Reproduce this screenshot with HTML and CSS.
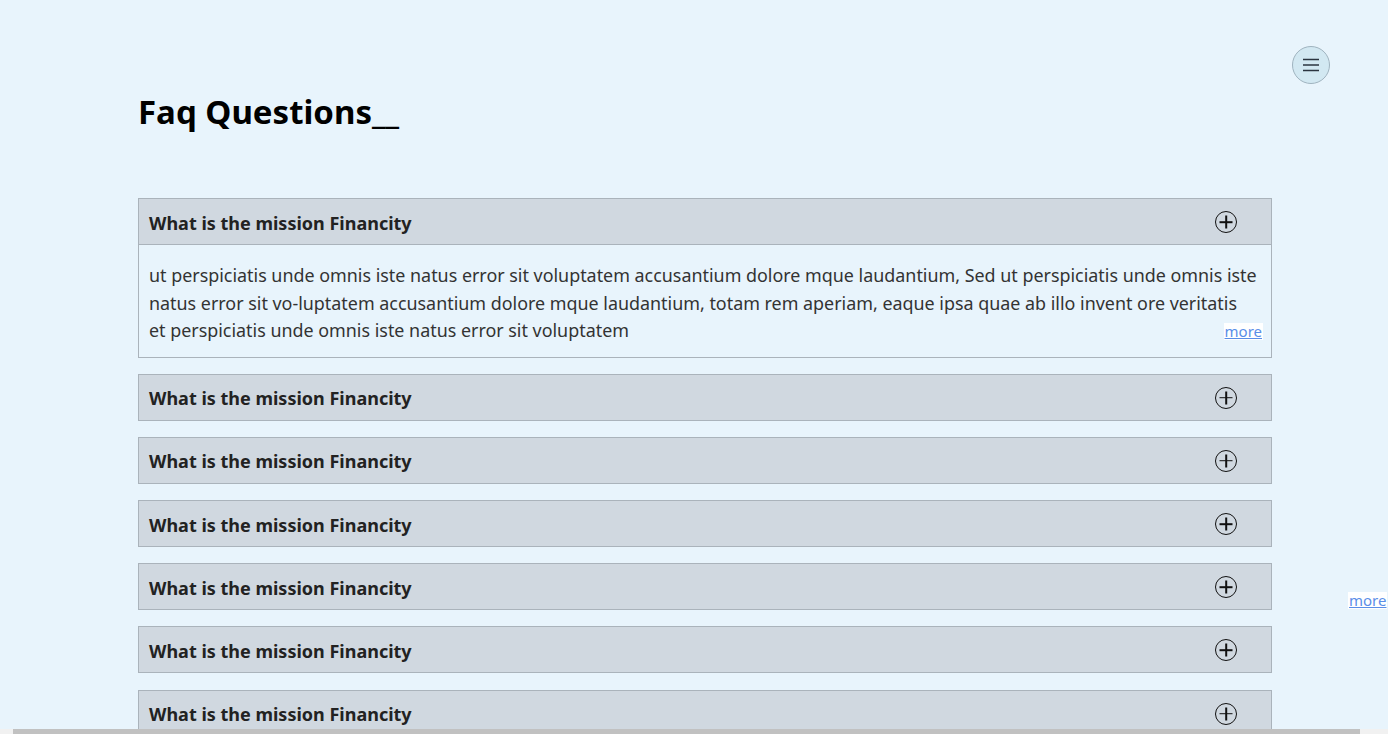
FILE: index.html
```html
<!DOCTYPE html>
<html lang="en">
<head>
<meta charset="utf-8">
<title>Faq Questions</title>
<link rel="stylesheet" href="styles.css">
</head>
<body>
<div class="page">
  <button class="menu-btn" aria-label="Menu">
    <svg width="16" height="14" viewBox="0 0 16 14"><path d="M0 1.5H16M0 7H16M0 12.5H16" stroke="#2b3440" stroke-width="1.3" fill="none"/></svg>
  </button>
  <main class="faq">
    <h1 class="title">Faq Questions__</h1>
    <div class="list">
      <div class="item open">
        <div class="head"><span class="q">What is the mission Financity</span><span class="plus"></span></div>
        <div class="body">
          <p>ut perspiciatis unde omnis iste natus error sit voluptatem accusantium dolore mque laudantium, Sed ut perspiciatis unde omnis iste natus error sit vo-luptatem accusantium dolore mque laudantium, totam rem aperiam, eaque ipsa quae ab illo invent ore veritatis et perspiciatis unde omnis iste natus error sit voluptatem</p>
          <a class="more" href="#">more</a>
        </div>
      </div>
      <div class="item"><div class="head"><span class="q">What is the mission Financity</span><span class="plus"></span></div></div>
      <div class="item"><div class="head"><span class="q">What is the mission Financity</span><span class="plus"></span></div></div>
      <div class="item"><div class="head"><span class="q">What is the mission Financity</span><span class="plus"></span></div></div>
      <div class="item"><div class="head"><span class="q">What is the mission Financity</span><span class="plus"></span></div></div>
      <div class="item"><div class="head"><span class="q">What is the mission Financity</span><span class="plus"></span></div></div>
      <div class="item"><div class="head"><span class="q">What is the mission Financity</span><span class="plus"></span></div></div>
    </div>
  </main>
  <a class="more stray" href="#">more</a>
</div>
<div class="hscroll"><div class="thumb"></div></div>
</body>
</html>
```
FILE: styles.css
```css
html, body {
  margin: 0;
  padding: 0;
  background: #e8f4fc;
  overflow: hidden;
}
body {
  font-family: "Noto Sans", "Open Sans", sans-serif;
  color: #222;
}
.page {
  position: relative;
  height: 734px;
}
.menu-btn {
  position: absolute;
  left: 1292px;
  top: 46px;
  width: 38px;
  height: 38px;
  border-radius: 50%;
  border: 1px solid #9fb3bf;
  background: #d2e8f2;
  padding: 0;
  display: flex;
  align-items: center;
  justify-content: center;
}
.faq {
  padding: 0 116px 0 138px;
}
.title {
  margin: 0;
  padding-top: 88px;
  font-size: 33px;
  line-height: 48px;
  font-weight: 700;
  color: #000;
}
.list {
  margin-top: 62px;
  display: flex;
  flex-direction: column;
  gap: 16.2px;
}
.item {
  border: 1px solid #aab3bb;
  background: #e8f4fc;
}
.head {
  height: 45px;
  background: #d0d8e0;
  display: flex;
  align-items: center;
  justify-content: space-between;
  padding: 0 34px 0 10px;
}
.item.open .head {
  border-bottom: 1px solid #aab3bb;
}
.q {
  font-size: 18px;
  font-weight: 700;
  color: #222;
  padding-top: 2px;
}
.plus {
  width: 20px;
  height: 20px;
  border: 1.6px solid #111;
  border-radius: 50%;
  position: relative;
  margin-top: 1px;
}
.plus::before, .plus::after {
  content: "";
  position: absolute;
  background: #111;
  left: 50%;
  top: 50%;
  transform: translate(-50%, -50%);
}
.plus::before { width: 13px; height: 1.6px; }
.plus::after { width: 1.6px; height: 13px; }
.body {
  position: relative;
  padding: 17px 14px 12px 10px;
}
.body p {
  margin: 0;
  font-size: 17.9px;
  line-height: 27.5px;
  color: #333;
}
.more {
  font-size: 15px;
  color: #5a8ee8;
  background: #fff;
  text-decoration: underline;
  line-height: 17px;
  padding: 0 1px;
}
.body .more {
  position: absolute;
  right: 8px;
  bottom: 17px;
}
.more.stray {
  position: absolute;
  left: 1348px;
  top: 592px;
}
.hscroll {
  position: fixed;
  left: 0;
  right: 0;
  bottom: 0;
  height: 5px;
  background: #f1f1f1;
}
.hscroll .thumb {
  margin-left: 13px;
  width: 1347px;
  height: 5px;
  background: #c1c1c1;
}
```
